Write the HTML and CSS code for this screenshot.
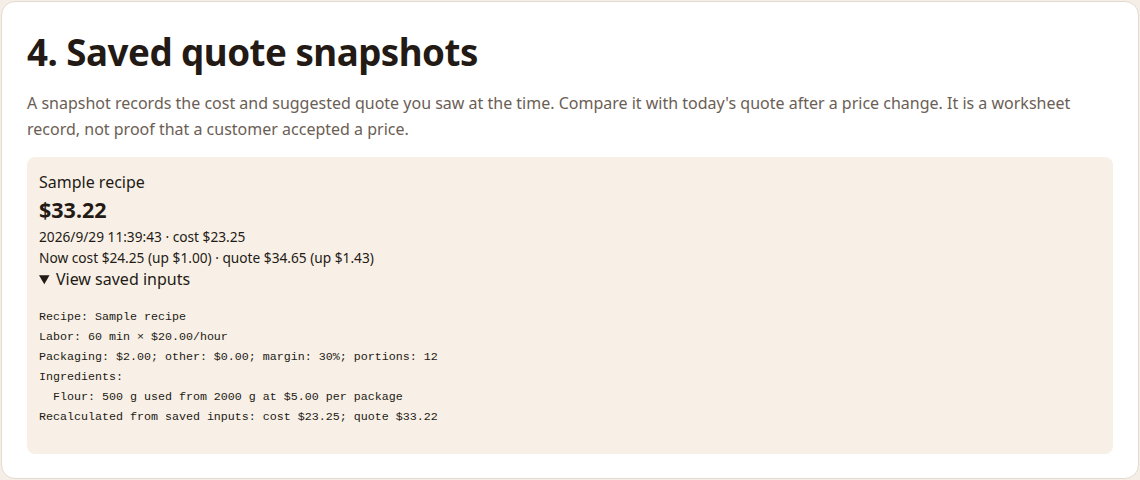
FILE: index.html
```html
<!DOCTYPE html>
<html lang="en">
<head>
<meta charset="utf-8">
<title>Saved quote snapshots</title>
<link rel="stylesheet" href="styles.css">
</head>
<body>
<section class="panel">
  <h2 class="panel-title">4. Saved quote snapshots</h2>
  <p class="panel-intro">A snapshot records the cost and suggested quote you saw at the time. Compare it with today's quote after a price change. It is a worksheet record, not proof that a customer accepted a price.</p>
  <article class="snapshot">
    <div class="snapshot-name">Sample recipe</div>
    <div class="snapshot-quote">$33.22</div>
    <div class="snapshot-meta">2026/9/29 11:39:43 · cost $23.25</div>
    <div class="snapshot-meta">Now cost $24.25 (up $1.00) · quote $34.65 (up $1.43)</div>
    <details class="snapshot-inputs" open>
      <summary>View saved inputs</summary>
      <pre>Recipe: Sample recipe
Labor: 60 min × $20.00/hour
Packaging: $2.00; other: $0.00; margin: 30%; portions: 12
Ingredients:
  Flour: 500 g used from 2000 g at $5.00 per package
Recalculated from saved inputs: cost $23.25; quote $33.22</pre>
    </details>
  </article>
</section>
</body>
</html>
```

FILE: styles.css
```css
html, body {
  margin: 0;
  background: #f4eee6;
}

body {
  padding: 1px;
  font-family: "Noto Sans", "Open Sans", sans-serif;
  color: #231a15;
}

.panel {
  box-sizing: border-box;
  height: 478px;
  background: #ffffff;
  border: 1px solid #e3dbcf;
  border-radius: 14px;
  padding: 24px 25px;
}

.panel-title {
  margin: 0;
  font-size: 36.7px;
  font-weight: 700;
  line-height: 52px;
  letter-spacing: -0.5px;
}

.panel-intro {
  margin: 12px 0 15px;
  font-size: 16px;
  line-height: 26px;
  color: #6b5e55;
}

.snapshot {
  background: #f8f0e6;
  border-radius: 8px;
  padding: 13px 12px 27px;
}

.snapshot-name {
  font-size: 16px;
  line-height: 24px;
}

.snapshot-quote {
  font-size: 21.5px;
  font-weight: 700;
  line-height: 32px;
}

.snapshot-meta {
  font-size: 13.7px;
  line-height: 21px;
}

.snapshot-inputs summary {
  font-size: 16px;
  line-height: 22px;
  cursor: pointer;
}

.snapshot-inputs pre {
  margin: 17px 0 0;
  font-family: "Liberation Mono", monospace;
  font-size: 11.67px;
  line-height: 20px;
  color: #231a15;
}
```
